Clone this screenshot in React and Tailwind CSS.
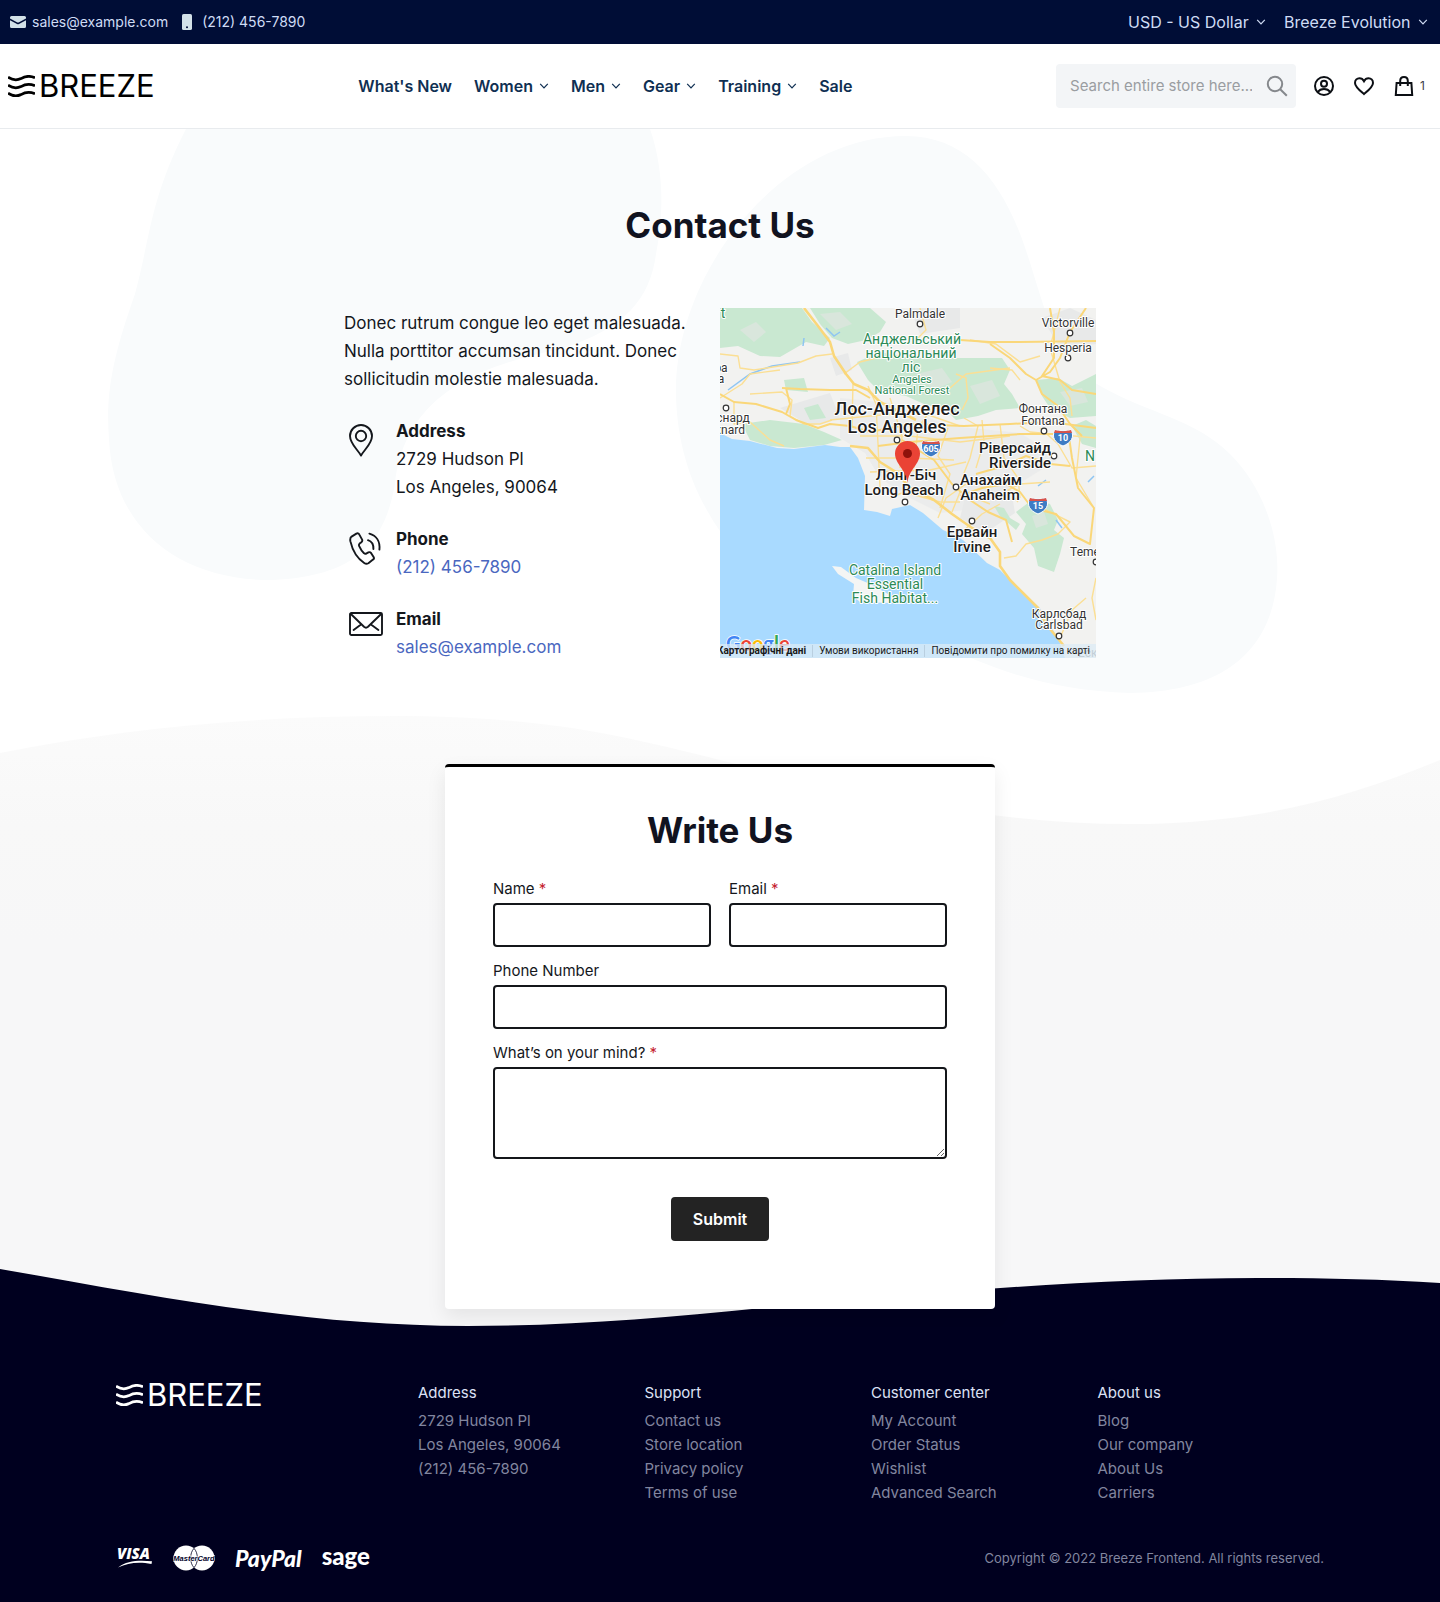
import React from "react";

const font = "font-['Inter','Liberation_Sans',sans-serif]";

function Chevron({ className = "" }) {
  return (
    <svg viewBox="0 0 10 6" className={`h-1.5 w-2.5 shrink-0 ${className}`} fill="none" stroke="currentColor" strokeWidth="1.2" aria-hidden="true">
      <path d="M1.2 0.8 L5 4.8 L8.8 0.8" />
    </svg>
  );
}

function Logo() {
  return (
    <a href="#" className="flex h-8 items-center gap-1">
      <svg viewBox="0 0 27 22" className="h-[22px] w-[27px]" fill="none" stroke="currentColor" strokeWidth="2.8" aria-hidden="true">
        <path d="M0 2.2 C4 4.900 8 6.200 13 3.600 C18 0.600 22 0.600 27 2.800" />
        <path d="M0 10.200 C4 12.900 8 14.200 13 11.600 C18 8.600 22 8.600 27 10.800" />
        <path d="M0 18.200 C4 20.900 8 22.200 13 19.600 C18 16.600 22 16.600 27 18.800" />
      </svg>
      <span className="text-[31px] leading-8 font-normal">BREEZE</span>
    </a>
  );
}

function TopSelect({ label, value }) {
  return (
    <span className="relative flex items-center">
      <select aria-label={label} className="appearance-none bg-transparent pr-[17px] text-base leading-6 text-[#cfdcf5]">
        <option>{value}</option>
      </select>
      <Chevron className="pointer-events-none absolute right-0 text-[#cfdcf5]" />
    </span>
  );
}

function TopBar() {
  return (
    <div className="flex h-11 items-center justify-between bg-[#000d36] pr-3 pl-2.5 text-[#cfdcf5]">
      <div className="flex items-center gap-3.5 text-sm">
        <a href="mailto:sales@example.com" className="flex items-center gap-1.5">
          <svg viewBox="0 0 16 12" className="h-3 w-4" aria-hidden="true">
            <path fill="#d3e1e8" d="M1.5 0h13A1.5 1.5 0 0 1 16 1.5v.9L8.6 6.4a1.3 1.3 0 0 1-1.2 0L0 2.4v-.9A1.5 1.5 0 0 1 1.500 0zM0 4.200l7 3.700a2.200 2.200 0 0 0 2 0l7-3.700v6.300A1.500 1.500 0 0 1 14.500 12h-13A1.500 1.500 0 0 1 0 10.500z" />
          </svg>
          sales@example.com
        </a>
        <a href="tel:2124567890" className="flex items-center gap-2.5">
          <svg viewBox="0 0 10 16" className="h-4 w-2.5" aria-hidden="true">
            <rect width="10" height="16" rx="1.6" fill="#d3e1e8" />
            <circle cx="5" cy="13.200" r="1" fill="#000d36" />
          </svg>
          (212) 456-7890
        </a>
      </div>
      <div className="flex items-center gap-[18px]">
        <TopSelect label="Currency" value="USD - US Dollar" />
        <TopSelect label="Store" value="Breeze Evolution" />
      </div>
    </div>
  );
}

const nav = [
  ["What's New", false],
  ["Women", true],
  ["Men", true],
  ["Gear", true],
  ["Training", true],
  ["Sale", false],
];

function Header() {
  return (
    <header className="flex h-[85px] items-center justify-between border-b border-[#e8ebee] bg-white pr-[15px] pl-2">
      <Logo />
      <nav className="flex items-center gap-[22px] text-base font-semibold text-[#0f2f52]">
        {nav.map(([name, more]) => (
          <a key={name} href="#" className="flex items-center gap-1.5">
            {name}
            {more && <Chevron />}
          </a>
        ))}
      </nav>
      <div className="flex items-center text-[#0c0f14]">
        <form role="search" className="flex h-11 w-60 items-center rounded bg-[#f3f5f7] pr-2 pl-3.5">
          <input type="search" aria-label="Search" placeholder="Search entire store here..." className="w-full min-w-0 bg-transparent text-[15px] text-black placeholder-[#9a9da1] outline-none" />
          <button type="submit" aria-label="Search" className="text-[#85888c]">
            <svg viewBox="0 0 22 22" className="size-[22px]" fill="none" stroke="currentColor" strokeWidth="2" aria-hidden="true">
              <circle cx="9" cy="9" r="7.200" />
              <path d="M14.200 14.200 L20.800 20.800" />
            </svg>
          </button>
        </form>
        <a href="#" aria-label="My account" className="ml-4">
          <svg viewBox="0 0 24 24" className="size-6" fill="none" stroke="currentColor" strokeWidth="2" aria-hidden="true">
            <circle cx="12" cy="12" r="9" />
            <circle cx="12" cy="9.800" r="3" />
            <path d="M5.800 18 C7.500 15.600 9.600 15 12 15 C14.400 15 16.500 15.600 18.200 18" />
          </svg>
        </a>
        <a href="#" aria-label="Wish list" className="ml-4">
          <svg viewBox="0 0 24 24" className="size-6" fill="none" stroke="currentColor" strokeWidth="2" aria-hidden="true">
            <path d="M12 20.100 C7.500 16.200 3 12.700 3 8.900 C3 6.100 5.100 4.300 7.400 4.300 C9.300 4.300 11 5.300 12 7.200 C13 5.300 14.700 4.300 16.600 4.300 C18.900 4.300 21 6.100 21 8.900 C21 12.700 16.500 16.200 12 20.100 Z" />
          </svg>
        </a>
        <a href="#" aria-label="Cart, 1 item" className="ml-4 flex items-center gap-1">
          <svg viewBox="0 0 24 24" className="size-6" fill="none" stroke="currentColor" strokeWidth="2" aria-hidden="true">
            <path d="M4.600 9 H19.400 L20.200 21 H3.800 Z" />
            <path d="M8.200 12 V7 C8.200 4.300 9.800 3 12 3 C14.200 3 15.800 4.300 15.800 7 V12" />
          </svg>
          <span className="text-xs text-[#3c4148]">1</span>
        </a>
      </div>
    </header>
  );
}

function Shield({ x, y, label }) {
  return (
    <g transform={`translate(${x} ${y})`}>
      <path d="M-8 -7 C-4 -6 4 -6 8 -7 C12 0 8 6 0 9 C-8 6 -12 0 -8 -7Z" fill="#3e7cc4" stroke="#fff" strokeWidth="1" />
      <path d="M-8 -7 C-4 -5.500 4 -5.500 8 -7 L9 -4 H-9 Z" fill="#d9534a" />
      <text y="4" textAnchor="middle" fontSize="9" fontWeight="700" fill="#fff">{label}</text>
    </g>
  );
}

const places = [
  [200, 10, "Palmdale", 12], [348, 19, "Victorville", 12], [348, 44, "Hesperia", 12],
  [1, 64, "ра", 12], [1, 75, "а", 12], [13, 114, "снард", 12], [10, 126, "xnard", 12],
  [323, 105, "Фонтана", 12], [323, 117, "Fontana", 12], [365, 248, "Teme", 12],
  [339, 310, "Карлсбад", 12], [339, 321, "Carlsbad", 12],
];
const cities = [
  [177, 107, "Лос-Анджелес", 18], [177, 125, "Los Angeles", 18],
  [295, 145, "Ріверсайд", 15], [300, 160, "Riverside", 15],
  [186, 172, "Лонг-Біч", 15], [184, 187, "Long Beach", 15],
  [271, 177, "Анахайм", 15], [270, 192, "Anaheim", 15],
  [252, 229, "Ервайн", 15], [252, 244, "Irvine", 15],
];
const parks = [
  [3, 10, "t", 14], [192, 36, "Анджельський", 14], [191, 50, "національний", 14], [191, 64, "ліс", 14],
  [192, 75, "Angeles", 11], [192, 86, "National Forest", 11], [370, 153, "N", 14],
  [175, 267, "Catalina Island", 14], [175, 281, "Essential", 14], [175, 295, "Fish Habitat...", 14],
];
const dots = [[200, 16], [350, 25], [348, 50], [6, 100], [177, 132], [324, 123], [334, 148], [185, 194], [236, 179], [252, 213], [376, 254], [339, 328]];

function MapText({ items, fill, weight }) {
  return items.map(([x, y, label, size]) => (
    <text key={label + y} x={x} y={y} textAnchor="middle" fontSize={size} fontWeight={weight} fill={fill} stroke="#fff" strokeWidth="2" strokeLinejoin="round" paintOrder="stroke">{label}</text>
  ));
}

function MapView() {
  return (
    <div className="relative overflow-hidden font-['Roboto','Liberation_Sans',sans-serif]">
      <svg viewBox="0 0 376 350" className="block w-full" role="img" aria-label="Map of Los Angeles">
        <rect width="376" height="350" fill="#f2f2f0" />
        <g fill="#e8e9e9">
          <path d="M120 90 L170 95 L230 118 L300 125 L340 150 L300 175 L260 200 L220 205 L190 190 L160 170 L145 145 L120 130Z" opacity=".7" />
          <path d="M60 100 L110 85 L120 110 L90 118Z M110 50 L128 45 L132 62 L116 68Z M190 0 L240 0 L240 20 L200 26Z M322 10 L350 0 L376 12 L376 36 L340 40Z M250 170 L290 175 L295 205 L265 225 L240 210Z" />
        </g>
        <g fill="#c9e8d1">
          <path d="M0 0 H82 L92 14 L110 30 L104 38 L86 34 L60 49 L40 48 L18 38 L0 40Z" />
          <path d="M90 0 H150 L166 14 L160 24 L146 32 L128 36 L112 30 L100 16Z" />
          <path d="M137 54 L160 44 L190 50 H282 L290 62 L284 76 L292 86 L300 100 L276 102 L258 108 L236 112 L226 102 L204 96 L186 88 L160 84 L148 72Z" />
          <path d="M316 72 L338 70 L352 78 L376 66 V108 L350 110 L330 100 L322 88Z" />
          <path d="M22 116 L50 112 L84 116 L104 124 L122 132 L104 137 L74 140 L50 138 L30 132Z" />
          <path d="M64 72 L84 70 L88 84 L66 82Z M84 100 L98 96 L106 110 L90 112Z" />
          <path d="M296 204 L312 192 L330 196 L338 212 L334 222 L344 230 L340 246 L334 264 L318 258 L314 240 L302 226 L306 216Z" />
          <path d="M274 198 L284 200 L290 210 L300 216 L296 222 L280 208Z M352 118 L366 112 L376 118 V140 L362 136Z" />
        </g>
        <g fill="#d9e6dc">
          <path d="M20 22 L36 14 L46 24 L34 34Z M100 6 L120 4 L132 16 L116 22Z M196 66 L222 60 L232 74 L214 82Z M250 78 L272 72 L280 88 L260 96Z M340 84 L362 80 L368 94 L350 98Z M312 208 L324 204 L328 216 L316 220Z" />
        </g>
        <path d="M0 125 L12 131 L30 133 L57 140 L74 141 L105 137 L120 139 L130 139 L138 150 L145 168 L144 202 L157 204 L170 208 L172 201 L190 197 L203 205 L223 222 L232 226 L243 232 L267 255 L280 262 L293 275 L313 294 L320 300 L333 322 L340 335 L345 350 H0Z" fill="#a9daff" />
        <path d="M112 258 L121 259 L136 270 L150 276 L168 286 L170 295 L140 294 L133 288 L134 276 L118 266Z" fill="#f4f5f4" />
        <g fill="none" stroke="#8ec5f2" strokeWidth="1.500">
          <path d="M8 82 L30 66 L52 58 L80 54 M83 38 L84 30 M106 20 L114 28 L120 24 M318 178 L326 172 M336 212 L342 220 M368 174 L374 168" />
        </g>
        <g fill="none" stroke="#fbdf94" strokeWidth="1.400" strokeLinejoin="round">
          <path d="M0 46 L18 48 L20 60 L34 62 L78 55 L96 48 L112 46 M0 90 L22 76 L30 66 L60 62" />
          <path d="M30 86 L62 84 L72 92 L70 108 L84 116 L100 116 L112 112 M14 94 L14 116 L30 114 L50 132 L64 138" />
          <path d="M124 66 L140 54 L156 50 L178 48 M250 32 L276 36 L300 54 L320 48 M200 0 L206 22 L196 32" />
          <path d="M133 75 L132 118 M148 78 L156 96 L158 136 L160 180 M170 90 L182 128 L180 160 M212 100 L198 120 L194 160 M228 120 L218 148 L230 166 L220 200" />
          <path d="M110 112 L150 108 L200 104 L240 118 M140 128 L190 128 L240 134 L290 128 M146 150 L190 150 L234 152 M150 164 L210 162 L246 154" />
          <path d="M244 110 L258 118 L250 150 L242 170 M262 112 L264 134 L256 160 M280 116 L284 150 L298 170 L300 190 M300 118 L310 124 L376 130 M320 120 L338 136 L352 160 L376 158" />
          <path d="M236 66 L246 70 L248 90 L242 102 M270 60 L292 62 L300 72 M230 80 L246 66 L290 60" />
          <path d="M170 190 L184 184 L220 194 L240 194 M218 210 L226 190 L246 176 M232 204 L240 184 L270 196 M240 226 L262 206 L280 196" />
          <path d="M298 194 L288 182 L300 176 L330 174 M322 200 L350 214 L338 226 L322 232 L306 236 L296 248 L284 250 M376 270 L372 290 L376 312 M366 290 L352 302 L340 330" />
          <path d="M340 0 L330 40 L340 74 L350 90 L352 108 M360 130 L356 170 L374 200" />
        </g>
        <g fill="none" stroke="#fad779" strokeWidth="2.600" strokeLinejoin="round">
          <path d="M84 0 L98 18 L110 34 L114 48 L126 66 L134 76 L148 82 L160 94 L180 104 L196 112" />
          <path d="M0 86 L14 94 L36 96 L62 104 L76 112 L98 120 L110 116 L130 118 L150 124 L190 116 L244 118 L290 116 L330 114 L376 120" strokeWidth="2" />
          <path d="M62 80 L80 81 L110 82 L136 82 L150 90 M66 80 L70 96 L66 106" strokeWidth="2" />
          <path d="M240 32 L270 34 L300 34 L376 33 M270 36 L290 50 L306 66 L316 72 L322 86 L338 98 L350 116 L362 128" strokeWidth="2" />
          <path d="M366 0 L350 24 L340 50 L330 64 L316 72 M330 0 L334 24 L334 50 L322 68 L340 72 L352 82 L376 86" strokeWidth="2" />
          <path d="M130 138 L148 140 L160 154 L176 164 L190 180 L214 192 L232 206 L252 220 L270 230 L280 244 L280 258 L290 272 L306 288 L318 300 L326 316 L344 338" />
          <path d="M182 132 L198 142 L214 152 L232 176 L250 192 L268 204 L286 212 L292 234 M158 138 L190 134 L240 130 L300 126 L340 126" strokeWidth="2" />
          <path d="M256 166 L284 158 L306 148 L330 156 L350 158 M240 188 L262 180 L286 176 L300 184 L312 200 L336 206 L354 228 L370 236 L374 200 L358 180 L352 150 L348 122" strokeWidth="2" />
        </g>
        <g fill="#fff" stroke="#333" strokeWidth="1.200">
          {dots.map(([x, y]) => <circle key={`${x}-${y}`} cx={x} cy={y} r="2.800" />)}
        </g>
        <Shield x={211} y={140} label="605" />
        <Shield x={343} y={129} label="10" />
        <Shield x={318} y={197} label="15" />
        <MapText items={parks} fill="#2c8a57" weight="400" />
        <MapText items={places} fill="#333" weight="400" />
        <MapText items={cities} fill="#1c1c1c" weight="500" />
        <path d="M187.500 175 C186.500 162 175 156 175 145.500 A12.500 12.500 0 0 1 200 145.500 C200 156 188.500 162 187.500 175Z" fill="#ea4335" />
        <circle cx="187.500" cy="145.500" r="4.500" fill="#8f120b" />
        <text x="358" y="349" fontSize="12" fill="#777">Еск</text>
        <text x="6" y="343" fontSize="20" fontWeight="700" stroke="#fff" strokeWidth="1.500" paintOrder="stroke" fontFamily="Lato, sans-serif">
          <tspan fill="#4285f4">G</tspan><tspan fill="#ea4335">o</tspan><tspan fill="#fbbc05">o</tspan><tspan fill="#4285f4">g</tspan><tspan fill="#34a853">l</tspan><tspan fill="#ea4335">e</tspan>
        </text>
      </svg>
      <div className="absolute inset-x-0 bottom-0 flex h-3.5 items-center justify-end bg-[#dcebf5]/75 pr-1.5 text-[10px] leading-3 whitespace-nowrap text-[#1a1a1a]">
        <a href="#" className="pr-1.5 font-bold">Картографічні дані</a>
        <a href="#" className="border-l border-[#b9cfe0] px-1.5">Умови використання</a>
        <a href="#" className="border-l border-[#b9cfe0] pl-1.5">Повідомити про помилку на карті</a>
      </div>
    </div>
  );
}

function PinIcon() {
  return (
    <svg viewBox="0 0 24 33" className="h-[33px] w-6" fill="none" stroke="#14171c" strokeWidth="1.900" strokeLinejoin="round" aria-hidden="true">
      <path d="M12 31.600 C9.500 26.500 1 20 1 12 A11 11 0 0 1 23 12 C23 20 14.500 26.500 12 31.600Z" />
      <circle cx="12" cy="12" r="5.200" />
    </svg>
  );
}

function PhoneIcon() {
  return (
    <svg viewBox="0 0 32 33" className="h-[33px] w-8" fill="none" stroke="#14171c" strokeWidth="1.900" strokeLinejoin="round" strokeLinecap="round" aria-hidden="true">
      <path d="M2.600 4.600 L7.400 1.600 C8.600 1 9.600 1.200 10.200 2.400 L13 7.400 C13.600 8.600 13.400 9.400 12.400 10.200 L10.600 11.600 C9.800 12.400 9.800 13.200 10.200 14.200 C11.400 17 13 19.400 15 21.200 C15.800 22 16.600 22 17.600 21.400 L19.400 20.400 C20.600 19.800 21.400 20.200 22.200 21.200 L24.600 25 C25.200 26 25 27 24 27.600 L19.400 31.200 C18 32 16.600 32 15.200 31 C8.600 26.600 3.400 18 1.400 9.400 C1 7.400 1.200 5.600 2.600 4.600Z" />
      <path d="M19 8.200 C22.600 9.400 24.600 12.400 24.400 17 M20.400 1.600 C27.400 3.600 31.200 9.600 30.400 17.600" />
    </svg>
  );
}

function MailIcon() {
  return (
    <svg viewBox="0 0 34 24" className="h-6 w-[34px]" fill="none" stroke="#14171c" strokeWidth="1.900" strokeLinejoin="round" strokeLinecap="round" aria-hidden="true">
      <rect x="1" y="1" width="32" height="22" rx="1.500" />
      <path d="M1.600 1.800 L15 14.800 C16.400 16 17.600 16 19 14.800 L32.400 1.800 M12 12.400 L4.600 18 M22 12.400 L29.400 18" />
    </svg>
  );
}

function ContactItem({ icon, title, children }) {
  return (
    <div className="flex">
      <div className="w-[52px] shrink-0 pt-[7px] pl-[5px]">{icon}</div>
      <div>
        <h2 className="font-bold">{title}</h2>
        {children}
      </div>
    </div>
  );
}

function Field({ id, label, required, children }) {
  return (
    <div className="flex flex-col gap-0.5">
      <label htmlFor={id} className="text-[15px] leading-6">
        {label}
        {required && <span className="text-[#c5222f]"> *</span>}
      </label>
      {children}
    </div>
  );
}

const inputClass = "h-11 w-full rounded border-2 border-[#14161a] bg-white px-3 text-base";

function ContactForm() {
  return (
    <form className="mx-auto flex w-full max-w-[550px] flex-col rounded border-t-[3px] border-black bg-white px-12 pt-[43px] pb-[68px] shadow-[0_8px_20px_rgba(0,0,0,0.08)]">
      <h2 className="text-center text-[35px] leading-10 font-bold text-[#11131f]">Write Us</h2>
      <div className="mt-[27px] flex flex-col gap-3">
        <div className="grid grid-cols-2 gap-[18px]">
          <Field id="name" label="Name" required><input id="name" type="text" className={inputClass} /></Field>
          <Field id="email" label="Email" required><input id="email" type="email" className={inputClass} /></Field>
        </div>
        <Field id="phone" label="Phone Number"><input id="phone" type="tel" className={inputClass} /></Field>
        <Field id="message" label="What’s on your mind?" required>
          <textarea id="message" className="block h-[92px] w-full resize rounded border-2 border-[#14161a] bg-white px-3 py-2 text-base" />
        </Field>
      </div>
      <button type="submit" className="mt-[38px] h-11 self-center rounded bg-[#232323] px-[22px] text-base font-semibold text-white">Submit</button>
    </form>
  );
}

function Main() {
  return (
    <main className="relative isolate overflow-hidden bg-white px-4 pt-[76px] pb-[18px]">
      <svg viewBox="0 0 1440 600" preserveAspectRatio="none" className="absolute inset-x-0 top-0 -z-10 h-[600px] w-full" fill="#f9fbfc" aria-hidden="true">
        <path d="M186 0 C150 70 150 110 135 165 C110 235 106 270 109 310 C113 400 180 451 270 451 C360 448 385 410 395 355 C405 260 490 235 560 220 C625 200 650 170 656 125 C664 85 664 40 650 0Z" />
        <path d="M906 7 C965 7 1000 50 1022 110 C1044 170 1050 230 1102 258 C1150 285 1195 290 1230 325 C1265 360 1280 410 1277 450 C1272 520 1225 563 1130 564 C1050 562 990 540 930 510 C850 480 760 460 722 405 C690 360 675 310 676 255 C680 140 780 7 906 7Z" />
      </svg>
      <div className="absolute inset-x-0 top-[586px] bottom-0 -z-10 flex flex-col" aria-hidden="true">
        <svg viewBox="0 0 1440 110" preserveAspectRatio="none" className="block h-[110px] w-full">
          <defs>
            <linearGradient id="haze" x1="0" y1="0" x2="0" y2="1">
              <stop offset="0" stopColor="#fbfbfb" />
              <stop offset="1" stopColor="#f8f8f8" />
            </linearGradient>
          </defs>
          <path d="M0 38 C130 12 260 1 395 1 C540 1 620 20 716 44 C850 78 990 109 1130 109 C1260 109 1350 82 1440 45 V110 H0Z" fill="url(#haze)" />
        </svg>
        <div className="flex-1 bg-[linear-gradient(#f8f8f8,#f7f7f8_120px)]" />
        <svg viewBox="0 0 1440 58" preserveAspectRatio="none" className="absolute inset-x-0 bottom-0 h-[58px] w-full">
          <path d="M0 0 C170 30 310 57 468 57 C570 57 660 49 762 39 C930 24 1090 9 1258 9 C1320 9 1380 10 1440 14 V58 H0Z" fill="#00001f" />
        </svg>
      </div>
      <h1 className="text-center text-[35px] leading-10 font-bold text-[#11131f]">Contact Us</h1>
      <section className="mx-auto mt-[63px] grid max-w-[752px] grid-cols-2 items-start text-[17px] leading-7 text-[#14171c]">
        <div className="flex flex-col gap-6 pt-px">
          <p>Donec rutrum congue leo eget malesuada. Nulla porttitor accumsan tincidunt. Donec sollicitudin molestie malesuada.</p>
          <ContactItem icon={<PinIcon />} title="Address">
            <address className="not-italic">2729 Hudson Pl<br />Los Angeles, 90064</address>
          </ContactItem>
          <ContactItem icon={<PhoneIcon />} title="Phone">
            <a href="tel:2124567890" className="text-[#4a67c0]">(212) 456-7890</a>
          </ContactItem>
          <ContactItem icon={<MailIcon />} title="Email">
            <a href="mailto:sales@example.com" className="text-[#4a67c0]">sales@example.com</a>
          </ContactItem>
        </div>
        <MapView />
      </section>
      <section className="mt-[103px] text-[#14171c]">
        <ContactForm />
      </section>
    </main>
  );
}

const footerColumns = [
  ["Support", ["Contact us", "Store location", "Privacy policy", "Terms of use"]],
  ["Customer center", ["My Account", "Order Status", "Wishlist", "Advanced Search"]],
  ["About us", ["Blog", "Our company", "About Us", "Carriers"]],
];

function PaymentLogos() {
  return (
    <div className="flex h-7 items-center gap-5">
      <svg viewBox="0 0 37 26" className="h-[26px] w-[37px]" role="img" aria-label="Visa" fill="#fff">
        <text x="1" y="14" fontFamily="Open Sans, sans-serif" fontSize="15" fontWeight="800" fontStyle="italic">VISA</text>
        <path d="M2 22.500 C11 15.500 23 15 36 16.300 L35.500 19 C22 16.500 12 18 2 22.500Z" />
      </svg>
      <svg viewBox="0 0 42 26" className="h-[26px] w-[42px]" role="img" aria-label="MasterCard">
        <circle cx="13" cy="13" r="12.500" fill="#fff" />
        <circle cx="29" cy="13" r="12.500" fill="#fff" />
        <path d="M21 3.400 C16.500 8 16.500 18 21 22.600 C25.500 18 25.500 8 21 3.400Z" fill="none" stroke="#00001f" strokeWidth="0.800" />
        <text x="21" y="15.500" textAnchor="middle" fontFamily="Liberation Sans, sans-serif" fontSize="7.500" fontWeight="700" fontStyle="italic" fill="#00001f" stroke="#fff" strokeWidth="1" paintOrder="stroke">MasterCard</text>
      </svg>
      <span className="font-['Lato',sans-serif] text-[23px] leading-7 font-black text-white italic">PayPal</span>
      <span className="pb-1 font-['Lato',sans-serif] text-2xl leading-6 font-black text-white">sage</span>
    </div>
  );
}

function Footer() {
  return (
    <footer className="bg-[#00001f] px-4 pt-[54px] pb-[30px]">
      <div className="mx-auto max-w-[1208px]">
        <div className="grid grid-cols-[4fr_3fr_3fr_3fr_3fr] text-[15px] leading-6 text-[#82869f]">
          <div className="-mt-0.5 text-white"><Logo /></div>
          <div>
            <h3 className="mb-1 text-[#dde2f5]">Address</h3>
            <address className="not-italic">2729 Hudson Pl<br />Los Angeles, 90064<br /><a href="tel:2124567890">(212) 456-7890</a></address>
          </div>
          {footerColumns.map(([title, links]) => (
            <div key={title}>
              <h3 className="mb-1 text-[#dde2f5]">{title}</h3>
              <ul>
                {links.map((link) => <li key={link}><a href="#">{link}</a></li>)}
              </ul>
            </div>
          ))}
        </div>
        <div className="mt-[39px] flex items-center justify-between">
          <PaymentLogos />
          <p className="text-[13px] leading-5 text-[#82869f]">Copyright © 2022 Breeze Frontend. All rights reserved.</p>
        </div>
      </div>
    </footer>
  );
}

export default function App() {
  return (
    <div className={font}>
      <TopBar />
      <Header />
      <Main />
      <Footer />
    </div>
  );
}
